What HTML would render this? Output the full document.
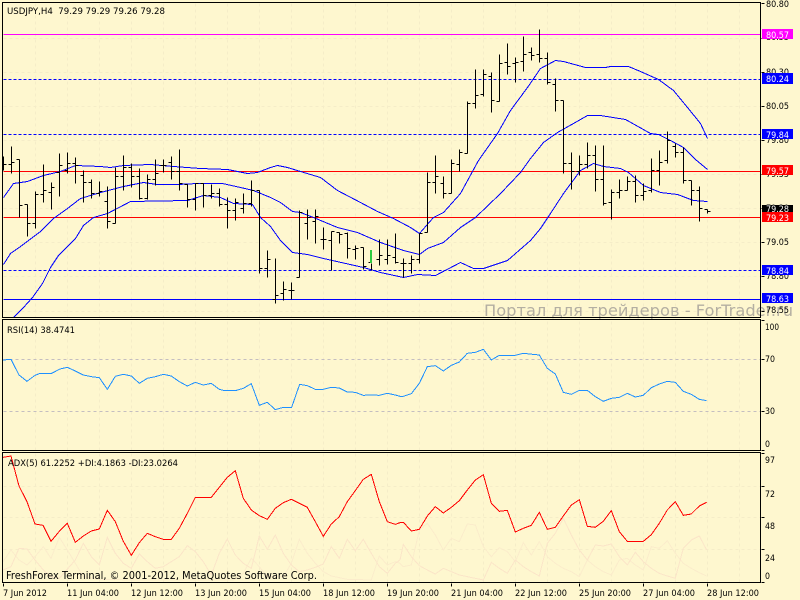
<!DOCTYPE html>
<html><head><meta charset="utf-8"><style>
html,body{margin:0;padding:0;background:#fef7cf;width:800px;height:600px;overflow:hidden}
svg{display:block}
text{font-family:"DejaVu Sans",sans-serif;font-size:9px;fill:#000}
.w{fill:#fff}
.c{shape-rendering:crispEdges;fill:none}
</style></head><body>
<svg width="800" height="600" viewBox="0 0 800 600" xmlns="http://www.w3.org/2000/svg">
<rect width="800" height="600" fill="#fef7cf"/>
<g class="c" transform="translate(.5,.5)">
<path stroke="#f5edc8" stroke-dasharray="3 3" d="M35 3V582M67 3V582M99 3V582M131 3V582M163 3V582M195 3V582M227 3V582M259 3V582M291 3V582M323 3V582M355 3V582M387 3V582M419 3V582M451 3V582M483 3V582M515 3V582M547 3V582M579 3V582M611 3V582M643 3V582M675 3V582M707 3V582M739 3V582"/>
<path stroke="#f5edc8" stroke-dasharray="3 3" d="M3 38H760M3 72H760M3 106H760M3 140H760M3 174H760M3 208H760M3 242H760M3 276H760M3 311H760M3 486H760M3 517H760M3 549H760"/>
<path stroke="#fef7cf" d="M0 318H760M0 451H760"/>
<path stroke="#ff00ff" d="M3 34H760"/>
<path stroke="#0000ff" stroke-dasharray="3 2" d="M3 79H760M3 134H760M3 270H760"/>
<path stroke="#ff0000" d="M3 171H760M3 217H760"/>
<path stroke="#0000ff" d="M3 299H760"/>
<path stroke="#c4bec0" stroke-dasharray="3 3" d="M3 359H760M3 411H760"/>

<!-- Bollinger bands -->
<path stroke="#0000ff" d="M3 197L13 183L27 181L43 175L60 171L75 165L100 166L110 167L123 165L150 164L173 166L200 168L227 169L247 173L257 172L270 167L277 165L287 167L300 171L320 177L337 190L360 202L377 211L393 218L410 227L419 233L433 217L443 212L460 193L478 160L497 133L510 110L527 87L540 68L555 60L563 61L585 67L605 67L610 66L628 66L640 71L658 79L673 90L687 107L700 123L707 138"/>
<path stroke="#0000ff" d="M3 264L10 253L20 246L32 237L40 231L53 218L67 208L80 198L100 192L123 186L143 182L157 184L177 184L197 183L222 183L240 187L253 190L270 197L280 202L292 211L300 212L313 217L337 227L357 232L380 242L403 250L419 254L427 248L443 242L460 227L475 217L500 193L520 172L530 158L543 142L557 132L573 123L587 115L600 115L625 119L650 133L658 134L670 140L683 147L695 159L707 169"/>
<path stroke="#0000ff" d="M13 317L23 307L32 297L42 283L50 267L58 255L75 238L83 225L93 217L107 213L130 201L187 200L203 195L220 197L233 203L252 204L260 217L270 226L280 240L292 252L307 254L323 258L363 267L380 272L403 277L417 274L435 275L460 262L473 268L483 268L507 260L530 240L540 228L550 213L563 193L580 170L593 163L603 166L620 168L628 172L643 185L660 192L677 194L693 200L707 201"/>

<!-- OHLC bars -->
<path stroke="#000" d="
M3 156V170M3 164H6
M11 146V173M8 164H11M11 162H14
M19 159V217M16 159H19M19 205H22
M27 204V236M24 204H27M27 223H30
M35 191V228M32 223H35M35 194H38
M43 164V202M40 194H43M43 190H46
M51 182V209M48 192H51M51 187H54
M59 153V196M56 172H59M59 165H62
M67 152V173M64 170H67M67 163H70
M75 157V183M72 163H75M75 165H78
M83 170V202M80 175H83M83 182H86
M91 179V198M88 182H91M91 193H94
M99 181V196M96 193H99M99 191H102
M107 186V228M104 201H107M107 221H110
M115 167V223M112 223H115M115 176H118
M123 155V190M120 176H123M123 167H126
M131 163V187M128 167H131M131 176H134
M139 168V199M136 176H139M139 198H142
M147 174V199M144 198H147M147 179H150
M155 159V185M152 179H155M155 173H158
M163 159V172M160 165H163M163 165H166
M171 156V179M168 162H171M171 171H174
M179 149V190M176 171H179M179 183H182
M187 184V207M184 184H187M187 199H190
M195 183V210M192 199H195M195 183H198
M203 183V207M200 183H203M203 195H206
M211 184V198M208 195H211M211 193H214
M219 188V206M216 193H219M219 204H222
M227 197V228M224 204H227M227 210H230
M235 198V220M232 210H235M235 202H238
M243 193V213M240 208H243M243 203H246
M251 180V206M248 203H251M251 190H254
M259 190V273M256 190H259M259 268H262
M267 250V277M264 268H267M267 259H270
M275 258V303M272 299H275M275 295H278
M283 281V300M280 293H283M283 289H286
M291 282V299M288 290H291M291 290H294
M299 210V277M296 277H299M299 212H302
M307 209V239M304 223H307M307 217H310
M315 209V243M312 221H315M315 216H318
M323 227V249M320 239H323M323 239H326
M331 231V270M328 240H331M331 231H334
M339 232V243M336 232H339M339 234H342
M347 232V258M344 233H347M347 248H350
M355 245V259M352 249H355M355 248H358
M363 247V269M360 247H363M363 266H366
M379 239V265M376 259H379M379 255H382
M387 239V264M384 259H387M387 255H390
M395 233V263M392 257H395M395 262H398
M403 258V277M400 263H403M403 263H406
M411 255V273M408 263H411M411 259H414
M419 233V263M416 259H419M419 233H422
M427 172V232M424 232H427M427 182H430
M435 155V193M432 182H435M435 176H438
M443 176V198M440 183H443M443 193H446
M451 159V193M448 193H451M451 163H454
M459 149V171M456 164H459M459 152H462
M467 101V153M464 153H467M467 103H470
M475 69V108M472 103H475M475 95H478
M483 69V96M480 94H483M483 74H486
M491 72V112M488 76H491M491 100H494
M499 54V101M496 101H499M499 63H502
M507 43V74M504 62H507M507 66H510
M515 57V82M512 63H515M515 62H518
M523 36V71M520 61H523M523 54H526
M531 47V60M528 52H531M531 55H534
M539 29V62M536 54H539M539 58H542
M547 52V84M544 58H547M547 82H550
M555 78V111M552 84H555M555 100H558
M563 100V173M560 100H563M563 163H566
M571 152V189M568 163H571M571 171H574
M579 155V175M576 171H579M579 164H582
M587 142V168M584 164H587M587 155H590
M595 145V191M592 155H595M595 179H598
M603 145V205M600 179H603M603 203H606
M611 189V219M608 202H611M611 192H614
M619 179V198M616 192H619M619 190H622
M627 176V190M624 190H627M627 181H630
M635 175V202M632 181H635M635 195H638
M643 183V200M640 195H643M643 191H646
M651 158V192M648 190H651M651 170H654
M659 150V185M656 170H659M659 162H662
M667 131V163M664 160H667M667 140H670
M675 143V157M672 146H675M675 152H678
M683 147V183M680 152H683M683 180H686
M691 180V205M688 180H691M691 190H694
M699 186V221M696 190H699M699 208H702
M707 209V213M704 209H707M707 211H710
"/>
<path stroke="#000" d="M371 263V270M368 262H371"/>
</g>
<rect x="370" y="250" width="2" height="13" fill="#2ecc40"/>

<!-- RSI -->
<g fill="none" stroke="#1e90ff" class="c">
<polyline vector-effect="non-scaling-stroke" transform="translate(0,315) scale(.3333)" points="9,135 33,133 57,180 81,199 105,181 120,175 155,175 180,162 202,157 226,168 250,180 274,185 298,188 322,223 346,184 370,178 394,183 418,205 442,190 466,185 490,178 514,183 538,200 562,213 586,202 610,210 634,205 658,223 674,227 706,227 730,220 754,206 778,271 802,262 826,284 850,277 875,277 899,208 922,212 946,223 970,223 994,217 1018,219 1042,231 1066,232 1090,241 1114,240 1138,241 1162,235 1186,240 1200,244"/>
<polyline vector-effect="non-scaling-stroke" transform="translate(400,315) scale(.3333)" points="0,244 10,244 34,236 58,205 82,155 106,152 130,168 154,151 178,141 202,115 226,112 250,103 274,135 298,121 346,121 370,115 418,120 442,160 466,177 490,232 514,238 538,226 562,226 586,245 610,259 634,250 658,247 682,235 706,246 730,241 754,218 778,207 802,199 826,202 850,229 874,238 898,253 920,257"/>
</g>

<!-- ADX -->
<g fill="none" class="c">
<polyline stroke="#fbeccb" vector-effect="non-scaling-stroke" transform="translate(0,450) scale(.3333)" points="9,335 33,300 57,330 81,345 105,320 130,290 153,325 178,262 202,300 226,340 250,380 300,388 400,390 500,390 600,390 700,390 730,370 754,325 778,350 802,380 850,380 874,340 898,268 922,310 946,340 970,365 994,378 1042,388 1114,390 1138,318 1162,345 1186,335 1200,340"/>
<polyline stroke="#fbeccb" vector-effect="non-scaling-stroke" transform="translate(400,450) scale(.3333)" points="0,340 10,350 34,345 58,240 82,220 106,255 130,300 154,265 178,275 202,222 226,225 250,290 274,320 298,293 322,305 346,335 370,278 394,315 418,275 442,320 466,340 490,355 514,365 538,380 562,330 586,350 610,365 634,375 658,330 682,325 706,345 730,360 754,290 778,295 802,272 826,310 850,340 874,355 898,368 920,378"/>
<polyline stroke="#fbe5c8" vector-effect="non-scaling-stroke" transform="translate(0,450) scale(.3333)" points="9,360 33,350 57,295 81,297 105,330 130,360 153,380 178,385 226,330 250,280 274,320 298,345 322,262 346,310 370,340 394,355 418,312 442,335 466,355 490,350 514,335 538,320 562,287 586,305 610,335 634,375 658,310 682,267 706,315 730,340 754,355 778,258 802,298 826,255 850,310 874,345 898,365 922,360 946,352 970,342 994,290 1018,325 1042,268 1066,302 1090,268 1114,310 1138,350 1162,370 1186,340 1200,330"/>
<polyline stroke="#fbe5c8" vector-effect="non-scaling-stroke" transform="translate(400,450) scale(.3333)" points="0,330 10,283 34,320 58,347 82,360 106,372 130,355 154,365 178,375 202,380 226,385 250,390 274,337 298,355 322,370 346,330 370,350 394,365 418,378 442,280 466,250 490,205 514,255 538,300 562,330 586,285 610,288 634,282 658,320 682,345 706,307 730,335 754,355 778,370 802,378 826,385 850,295 874,270 898,258 920,300"/>
<polyline stroke="#ff0000" vector-effect="non-scaling-stroke" transform="translate(0,450) scale(.3333)" points="9,22 33,18 57,108 81,155 105,222 129,226 153,274 177,245 202,220 226,277 250,258 274,243 298,237 322,181 346,215 370,274 394,316 418,278 442,250 466,260 490,268 514,268 538,235 562,190 586,142 634,142 658,112 682,82 706,62 730,145 754,180 778,197 802,208 826,175 850,158 874,148 898,160 922,172 946,215 970,259 994,222 1018,200 1042,155 1066,122 1090,88 1114,73 1138,155 1162,215 1186,223 1200,218"/>
<polyline stroke="#ff0000" vector-effect="non-scaling-stroke" transform="translate(400,450) scale(.3333)" points="0,218 10,217 34,243 58,238 82,198 106,170 130,189 154,172 178,152 202,120 226,90 250,74 274,160 298,184 322,181 346,246 370,235 394,226 418,187 442,238 466,232 490,198 514,165 538,149 562,229 586,232 610,214 634,182 658,245 682,274 730,274 754,254 778,220 802,180 826,155 850,196 874,192 898,168 920,157"/>
</g>

<text x="484" y="316" textLength="309" lengthAdjust="spacingAndGlyphs" style="font-size:16px;fill:#aca69c;fill-opacity:.9">Портал для трейдеров - ForTrader.ru</text>

<!-- borders & ticks -->
<g class="c" stroke="#000" transform="translate(.5,.5)">
<path d="M2 2H760V317H2ZM2 319H760V450H2ZM2 452H760V582H2Z"/>
<path d="M761 3H764M761 38H764M761 72H764M761 106H764M761 140H764M761 174H764M761 208H764M761 242H764M761 276H764M761 311H764M761 320H764M761 359H764M761 411H764M761 450H764M761 453H764M761 486H764M761 517H764M761 549H764M761 582H764"/>
<path d="M3 583V586M67 583V586M131 583V586M195 583V586M259 583V586M323 583V586M387 583V586M451 583V586M515 583V586M579 583V586M643 583V586M707 583V586"/>
</g>

<!-- axis prices -->
<text x="766" y="7" textLength="23" lengthAdjust="spacingAndGlyphs">80.80</text>
<text x="766" y="40" textLength="23" lengthAdjust="spacingAndGlyphs">80.55</text>
<text x="766" y="75" textLength="23" lengthAdjust="spacingAndGlyphs">80.30</text>
<text x="766" y="109" textLength="23" lengthAdjust="spacingAndGlyphs">80.05</text>
<text x="766" y="143" textLength="23" lengthAdjust="spacingAndGlyphs">79.80</text>
<text x="766" y="177" textLength="23" lengthAdjust="spacingAndGlyphs">79.55</text>
<text x="766" y="211" textLength="23" lengthAdjust="spacingAndGlyphs">79.30</text>
<text x="766" y="245" textLength="23" lengthAdjust="spacingAndGlyphs">79.05</text>
<text x="766" y="279" textLength="23" lengthAdjust="spacingAndGlyphs">78.80</text>
<text x="766" y="313" textLength="23" lengthAdjust="spacingAndGlyphs">78.55</text>

<!-- price labels -->
<rect x="762" y="29" width="31" height="10" fill="#ff00ff"/><text class="w" x="766" y="38" textLength="23" lengthAdjust="spacingAndGlyphs">80.57</text>
<rect x="762" y="73" width="31" height="11" fill="#0000ff"/><text class="w" x="766" y="82" textLength="23" lengthAdjust="spacingAndGlyphs">80.24</text>
<rect x="762" y="129" width="31" height="10" fill="#0000ff"/><text class="w" x="766" y="138" textLength="23" lengthAdjust="spacingAndGlyphs">79.84</text>
<rect x="762" y="165" width="31" height="10" fill="#ff0000"/><text class="w" x="766" y="174" textLength="23" lengthAdjust="spacingAndGlyphs">79.57</text>
<rect x="762" y="205" width="31" height="8" fill="#000"/><text class="w" x="766" y="212" textLength="23" lengthAdjust="spacingAndGlyphs">79.28</text>
<rect x="762" y="212" width="31" height="10" fill="#ff0000"/><text class="w" x="766" y="221" textLength="23" lengthAdjust="spacingAndGlyphs">79.23</text>
<rect x="762" y="265" width="31" height="10" fill="#0000ff"/><text class="w" x="766" y="274" textLength="23" lengthAdjust="spacingAndGlyphs">78.84</text>
<rect x="762" y="293" width="31" height="10" fill="#0000ff"/><text class="w" x="766" y="302" textLength="23" lengthAdjust="spacingAndGlyphs">78.63</text>

<!-- RSI / ADX axis -->
<text x="765" y="330" textLength="14" lengthAdjust="spacingAndGlyphs">100</text>
<text x="765" y="362" textLength="10" lengthAdjust="spacingAndGlyphs">70</text>
<text x="765" y="414" textLength="10" lengthAdjust="spacingAndGlyphs">30</text>
<text x="765" y="447" textLength="5" lengthAdjust="spacingAndGlyphs">0</text>
<text x="765" y="463" textLength="10" lengthAdjust="spacingAndGlyphs">97</text>
<text x="765" y="497" textLength="10" lengthAdjust="spacingAndGlyphs">72</text>
<text x="765" y="529" textLength="10" lengthAdjust="spacingAndGlyphs">48</text>
<text x="765" y="561" textLength="10" lengthAdjust="spacingAndGlyphs">24</text>
<text x="765" y="579" textLength="5" lengthAdjust="spacingAndGlyphs">0</text>

<!-- titles -->
<text x="7" y="14" textLength="158" lengthAdjust="spacingAndGlyphs" xml:space="preserve">USDJPY,H4  79.29 79.29 79.26 79.28</text>
<text x="7" y="333" textLength="68" lengthAdjust="spacingAndGlyphs">RSI(14) 38.4741</text>
<text x="8" y="466" textLength="170" lengthAdjust="spacingAndGlyphs">ADX(5) 61.2252 +DI:4.1863 -DI:23.0264</text>
<text x="6" y="579" textLength="311" lengthAdjust="spacingAndGlyphs" style="font-size:10.5px">FreshForex Terminal, © 2001-2012, MetaQuotes Software Corp.</text>

<!-- time axis -->
<text x="3" y="596" textLength="44" lengthAdjust="spacingAndGlyphs">7 Jun 2012</text>
<text x="67" y="596" textLength="52" lengthAdjust="spacingAndGlyphs">11 Jun 04:00</text>
<text x="131" y="596" textLength="52" lengthAdjust="spacingAndGlyphs">12 Jun 12:00</text>
<text x="195" y="596" textLength="52" lengthAdjust="spacingAndGlyphs">13 Jun 20:00</text>
<text x="259" y="596" textLength="52" lengthAdjust="spacingAndGlyphs">15 Jun 04:00</text>
<text x="323" y="596" textLength="52" lengthAdjust="spacingAndGlyphs">18 Jun 12:00</text>
<text x="387" y="596" textLength="52" lengthAdjust="spacingAndGlyphs">19 Jun 20:00</text>
<text x="451" y="596" textLength="52" lengthAdjust="spacingAndGlyphs">21 Jun 04:00</text>
<text x="515" y="596" textLength="52" lengthAdjust="spacingAndGlyphs">22 Jun 12:00</text>
<text x="579" y="596" textLength="52" lengthAdjust="spacingAndGlyphs">25 Jun 20:00</text>
<text x="643" y="596" textLength="52" lengthAdjust="spacingAndGlyphs">27 Jun 04:00</text>
<text x="707" y="596" textLength="52" lengthAdjust="spacingAndGlyphs">28 Jun 12:00</text>
</svg>
</body></html>
